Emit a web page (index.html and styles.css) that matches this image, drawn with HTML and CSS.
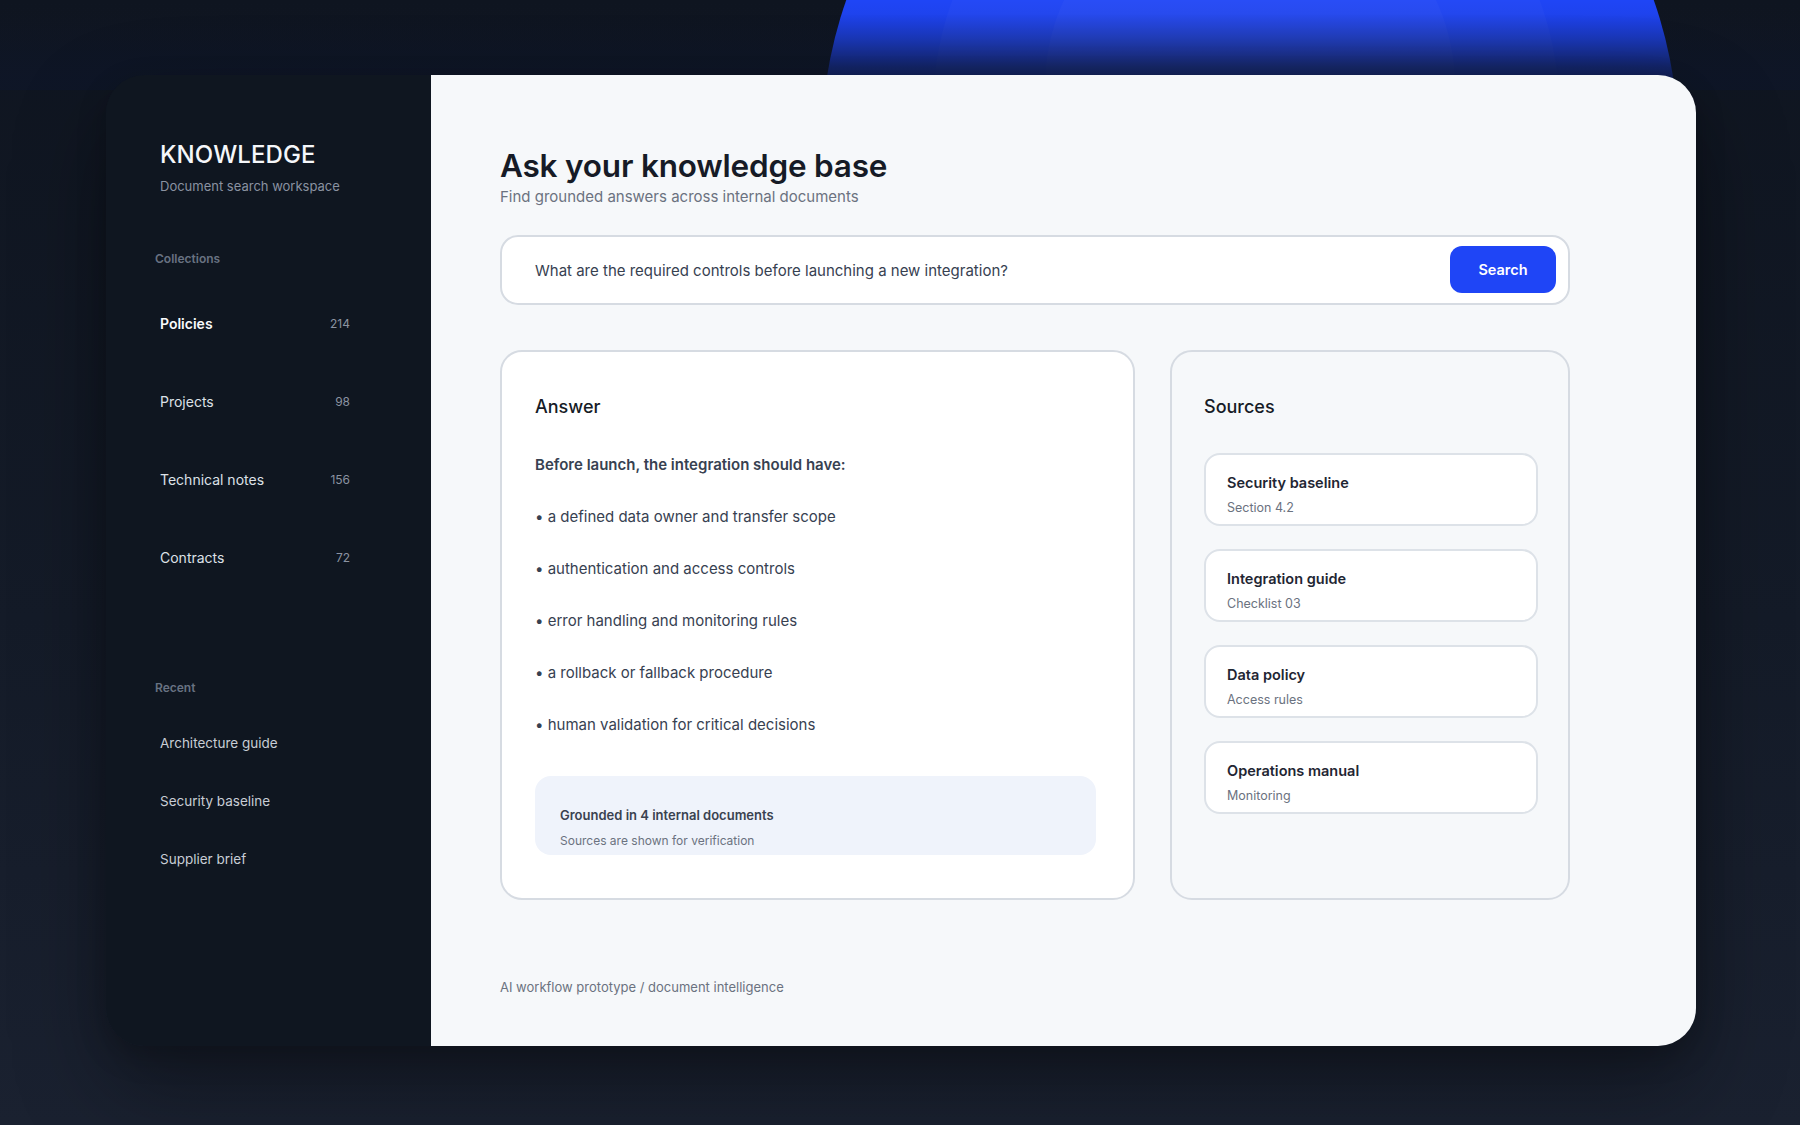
FILE: index.html
```html
<!DOCTYPE html>
<html lang="en">
<head>
<meta charset="utf-8">
<title>Knowledge</title>
<link rel="stylesheet" href="styles.css">
</head>
<body>
<div class="glow">
  <div class="orb orb-1"></div>
  <div class="orb orb-2"></div>
  <div class="orb orb-3"></div>
  <div class="glow-fade"></div>
</div>
<div class="page">
  <div class="window">
    <aside class="sidebar">
      <div class="brand">KNOWLEDGE</div>
      <div class="brand-sub">Document search workspace</div>

      <div class="label label-collections">Collections</div>
      <ul class="collections">
        <li class="col-item active"><span>Policies</span><span class="count">214</span></li>
        <li class="col-item"><span>Projects</span><span class="count">98</span></li>
        <li class="col-item"><span>Technical notes</span><span class="count">156</span></li>
        <li class="col-item"><span>Contracts</span><span class="count">72</span></li>
      </ul>

      <div class="label label-recent">Recent</div>
      <ul class="recent">
        <li class="recent-item">Architecture guide</li>
        <li class="recent-item">Security baseline</li>
        <li class="recent-item">Supplier brief</li>
      </ul>
    </aside>

    <main class="main">
      <h1 class="title">Ask your knowledge base</h1>
      <p class="subtitle">Find grounded answers across internal documents</p>

      <div class="search">
        <span class="query">What are the required controls before launching a new integration?</span>
        <button class="search-btn">Search</button>
      </div>

      <div class="results">
        <section class="answer">
          <h2 class="card-title">Answer</h2>
          <p class="lead">Before launch, the integration should have:</p>
          <ul class="bullets">
            <li>• a defined data owner and transfer scope</li>
            <li>• authentication and access controls</li>
            <li>• error handling and monitoring rules</li>
            <li>• a rollback or fallback procedure</li>
            <li>• human validation for critical decisions</li>
          </ul>
          <div class="grounded">
            <div class="grounded-title">Grounded in 4 internal documents</div>
            <div class="grounded-sub">Sources are shown for verification</div>
          </div>
        </section>

        <section class="sources">
          <h2 class="card-title">Sources</h2>
          <div class="source-list">
            <div class="source"><div class="source-title">Security baseline</div><div class="source-sub">Section 4.2</div></div>
            <div class="source"><div class="source-title">Integration guide</div><div class="source-sub">Checklist 03</div></div>
            <div class="source"><div class="source-title">Data policy</div><div class="source-sub">Access rules</div></div>
            <div class="source"><div class="source-title">Operations manual</div><div class="source-sub">Monitoring</div></div>
          </div>
        </section>
      </div>

      <footer class="footer">AI workflow prototype / document intelligence</footer>
    </main>
  </div>
</div>
</body>
</html>
```

FILE: styles.css
```css
* { box-sizing: border-box; }

html, body {
  margin: 0;
  padding: 0;
}

body {
  width: 1800px;
  height: 1125px;
  overflow: hidden;
  font-family: Inter, "Noto Sans", "Liberation Sans", sans-serif;
  background: linear-gradient(180deg, #0f1520 0%, #141b28 55%, #1a2130 100%);
  position: relative;
}

/* decorative blue glow behind the window */
.glow {
  position: absolute;
  top: 0;
  left: 0;
  width: 1800px;
  height: 90px;
  overflow: hidden;
  z-index: 0;
}

.orb {
  position: absolute;
  border-radius: 50%;
}

.orb-1 {
  left: 822px;
  top: -286px;
  width: 856px;
  height: 856px;
  background: #1f45f6;
}

.orb-2 {
  left: 933px;
  top: -205px;
  width: 626px;
  height: 626px;
  background: rgba(255, 255, 255, 0.022);
}

.orb-3 {
  left: 1045px;
  top: -119px;
  width: 410px;
  height: 410px;
  background: rgba(255, 255, 255, 0.022);
}

.glow-fade {
  position: absolute;
  left: 0;
  top: 0;
  width: 100%;
  height: 90px;
  background: linear-gradient(180deg,
    rgba(14, 22, 40, 0) 0px,
    rgba(14, 22, 40, 0.04) 14px,
    rgba(14, 22, 40, 0.3) 38px,
    rgba(14, 22, 40, 0.68) 66px,
    rgba(14, 22, 40, 0.8) 80px);
}

.page {
  position: relative;
  z-index: 1;
  padding: 75px 0 0 106px;
}

.window {
  width: 1590px;
  height: 971px;
  display: flex;
  border-radius: 38px;
  overflow: hidden;
  box-shadow: 0 40px 90px rgba(0, 0, 0, 0.35), 0 10px 30px rgba(0, 0, 0, 0.2);
}

/* Sidebar */
.sidebar {
  width: 325px;
  flex: none;
  background: #0f1620;
  padding: 65px 76px 0 49px;
  color: #e5e7eb;
}

.brand {
  padding-left: 5px;
  font-size: 24px;
  line-height: 30px;
  font-weight: 500;
  color: #f5f7fa;
  letter-spacing: 0.1px;
}

.brand-sub {
  padding-left: 5px;
  margin-top: 6px;
  font-size: 13px;
  line-height: 20px;
  color: #8a92a0;
}

.label {
  font-size: 12px;
  line-height: 16px;
  font-weight: 600;
  color: #687282;
}

.label-collections { margin-top: 55px; }
.label-recent { margin-top: 84px; }

.collections, .recent {
  list-style: none;
  margin: 0;
  padding: 0;
}

.collections { margin-top: 17px; }

.col-item {
  height: 78px;
  padding: 0 5px;
  display: flex;
  align-items: center;
  justify-content: space-between;
  font-size: 14px;
  color: #dde1e7;
}

.col-item.active {
  color: #f8fafc;
  font-weight: 600;
}

.count {
  font-size: 12px;
  font-weight: 400;
  color: #8b93a1;
}

.recent { margin-top: 18px; }

.recent-item {
  height: 58px;
  padding: 0 5px;
  display: flex;
  align-items: center;
  font-size: 13.5px;
  color: #c8cdd5;
}

/* Main */
.main {
  flex: 1;
  background: #f6f8fa;
  padding: 71px 126px 0 69px;
  display: flex;
  flex-direction: column;
}

.title {
  margin: 0;
  font-size: 31.5px;
  line-height: 40px;
  font-weight: 600;
  color: #161b26;
  letter-spacing: -0.2px;
}

.subtitle {
  margin: 0;
  font-size: 15px;
  line-height: 22px;
  color: #6b7280;
}

.search {
  margin-top: 27px;
  height: 70px;
  background: #ffffff;
  border: 2px solid #d6dbe2;
  border-radius: 18px;
  display: flex;
  align-items: center;
  justify-content: space-between;
  padding: 0 12px 0 33px;
}

.query {
  font-size: 15px;
  color: #374151;
}

.search-btn {
  width: 106px;
  height: 47px;
  border: none;
  border-radius: 12px;
  background: #1f45f6;
  color: #ffffff;
  font-family: inherit;
  font-size: 14.5px;
  font-weight: 600;
  margin-top: -1px;
}

.results {
  margin-top: 45px;
  display: flex;
  gap: 35px;
  height: 550px;
}

.answer {
  width: 635px;
  flex: none;
  background: #ffffff;
  border: 2px solid #d6dbe2;
  border-radius: 22px;
  padding: 43px 37px 0 33px;
}

.sources {
  flex: 1;
  background: #f6f8fa;
  border: 2px solid #d6dbe2;
  border-radius: 22px;
  padding: 43px 30px 0 32px;
}

.card-title {
  margin: 0;
  font-size: 18px;
  line-height: 24px;
  font-weight: 500;
  color: #161b26;
}

.lead {
  margin: 35px 0 0;
  font-size: 15px;
  line-height: 22px;
  font-weight: 600;
  color: #374151;
}

.bullets {
  list-style: none;
  margin: 29px 0 0;
  padding: 0;
  display: flex;
  flex-direction: column;
  gap: 28px;
}

.bullets li {
  font-size: 15px;
  line-height: 24px;
  color: #374151;
}

.grounded {
  margin-top: 39px;
  height: 79px;
  background: #eff3fb;
  border-radius: 16px;
  padding: 29px 25px 0;
}

.grounded-title {
  font-size: 13px;
  line-height: 20px;
  font-weight: 600;
  color: #3a4250;
}

.grounded-sub {
  margin-top: 7px;
  font-size: 12px;
  line-height: 18px;
  color: #6b7280;
}

.source-list {
  margin-top: 34px;
  display: flex;
  flex-direction: column;
  gap: 23px;
}

.source {
  height: 73px;
  background: #ffffff;
  border: 2px solid #dde2e8;
  border-radius: 16px;
  padding: 18px 20px 0 21px;
}

.source-title {
  font-size: 14.5px;
  line-height: 20px;
  font-weight: 600;
  color: #1f2633;
}

.source-sub {
  margin-top: 6px;
  font-size: 12.5px;
  line-height: 18px;
  color: #6b7280;
}

.footer {
  margin-top: 78px;
  font-size: 13px;
  line-height: 18px;
  color: #6b7280;
}
```
